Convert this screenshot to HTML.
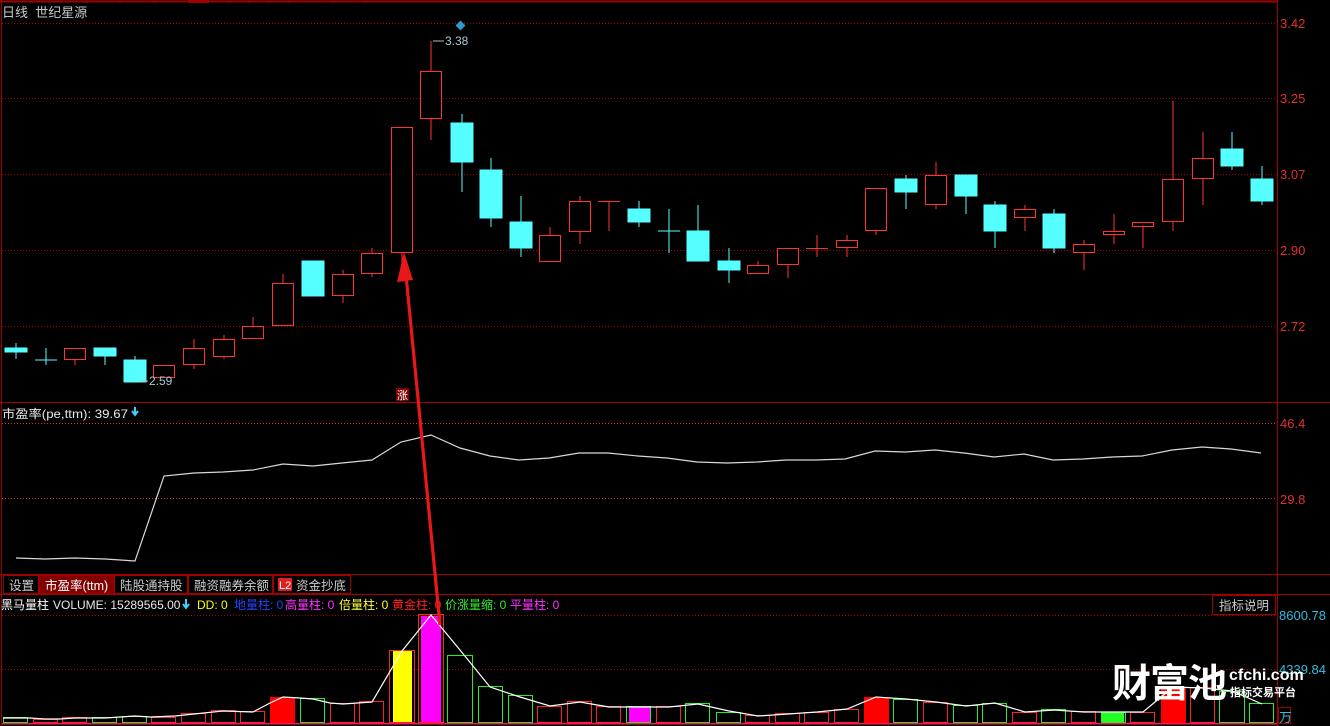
<!DOCTYPE html>
<html><head><meta charset="utf-8"><style>
html,body{margin:0;padding:0;background:#000;width:1330px;height:726px;overflow:hidden}
svg{display:block}
text{font-family:"Liberation Sans","Noto Sans CJK SC",sans-serif}
</style></head><body>
<svg width="1330" height="726" viewBox="0 0 1330 726" xmlns="http://www.w3.org/2000/svg">
<rect width="1330" height="726" fill="#000"/>
<g shape-rendering="crispEdges">
<line x1="0" y1="1.5" x2="1277" y2="1.5" stroke="#a00000" stroke-width="2"/>
<g stroke="#a00000"><line x1="33" y1="0" x2="33" y2="3"/><line x1="60" y1="0" x2="60" y2="3"/><line x1="87" y1="0" x2="87" y2="3"/><line x1="120" y1="0" x2="120" y2="3"/><line x1="155" y1="0" x2="155" y2="3"/><line x1="229" y1="0" x2="229" y2="3"/><line x1="249" y1="0" x2="249" y2="3"/><line x1="269" y1="0" x2="269" y2="3"/><line x1="289" y1="0" x2="289" y2="3"/><line x1="333" y1="0" x2="333" y2="3"/><line x1="365" y1="0" x2="365" y2="3"/></g>
<rect x="188" y="0" width="21" height="3" fill="#a00000"/>
<line x1="1.5" y1="0" x2="1.5" y2="726" stroke="#a00000"/>
<line x1="1277.5" y1="0" x2="1277.5" y2="726" stroke="#a00000"/>
<line x1="0" y1="402.5" x2="1330" y2="402.5" stroke="#a00000"/>
<line x1="0" y1="574.5" x2="1330" y2="574.5" stroke="#a00000"/>
<line x1="0" y1="594.5" x2="1330" y2="594.5" stroke="#a00000"/>
<g stroke="#b00000" stroke-dasharray="1,2">
<line x1="2" y1="23.5" x2="1277" y2="23.5"/><line x1="2" y1="98.5" x2="1277" y2="98.5"/><line x1="2" y1="174.5" x2="1277" y2="174.5"/><line x1="2" y1="250.5" x2="1277" y2="250.5"/><line x1="2" y1="326.5" x2="1277" y2="326.5"/>
<line x1="2" y1="423.5" x2="1277" y2="423.5" stroke="#e03030"/><line x1="2" y1="498.5" x2="1277" y2="498.5" stroke="#e03030"/>
<line x1="2" y1="615.5" x2="1277" y2="615.5"/><line x1="2" y1="669.5" x2="1277" y2="669.5"/>
</g>
</g>
<g fill="#e03030" font-size="13">
<text x="1280" y="28">3.42</text><text x="1280" y="103">3.25</text><text x="1280" y="179">3.07</text><text x="1280" y="255">2.90</text><text x="1280" y="331">2.72</text>
<text x="1280" y="428">46.4</text><text x="1280" y="504">29.8</text>
</g>
<g fill="#33bbdd" font-size="13"><text x="1279" y="620">8600.78</text><text x="1279" y="674">4339.84</text></g>
<rect x="1278.5" y="707.5" width="12" height="16" fill="none" stroke="#a00000"/>
<text x="1279" y="722" fill="#33bbdd" font-size="13">万</text>
<text x="2" y="17" fill="#c8c8c8" font-size="13">日线&#160;&#160;世纪星源</text>
<text x="2" y="418" fill="#e8e8e8" font-size="12" font-family="Liberation Mono" textLength="126" lengthAdjust="spacingAndGlyphs">市盈率(pe,ttm): 39.67</text>
<path d="M135 407v7M132 411l3 4 3-4" stroke="#44ccff" stroke-width="2" fill="none"/>

<g shape-rendering="crispEdges" stroke-width="1.2">
<g stroke="#55ffff" fill="#55ffff">
<line x1="16" y1="343" x2="16" y2="359"/><rect x="5" y="348" width="22" height="4"/>
<line x1="46" y1="348" x2="46" y2="365"/><line x1="35" y1="360" x2="57" y2="360"/>
<line x1="105" y1="348" x2="105" y2="365"/><rect x="94" y="348" width="22" height="8"/>
<line x1="135" y1="356" x2="135" y2="382"/><rect x="124" y="360" width="22" height="22"/>
<rect x="302" y="261" width="22" height="35"/>
<line x1="462" y1="114" x2="462" y2="192"/><rect x="451" y="123" width="22" height="39"/>
<line x1="491" y1="158" x2="491" y2="227"/><rect x="480" y="170" width="22" height="48"/>
<line x1="521" y1="196" x2="521" y2="257"/><rect x="510" y="222" width="22" height="26"/>
<line x1="639" y1="201" x2="639" y2="227"/><rect x="628" y="209" width="22" height="13"/>
<line x1="669" y1="209" x2="669" y2="253"/><line x1="658" y1="231" x2="680" y2="231"/>
<line x1="698" y1="205" x2="698" y2="261"/><rect x="687" y="231" width="22" height="30"/>
<line x1="729" y1="248" x2="729" y2="283"/><rect x="718" y="261" width="22" height="9"/>
<line x1="906" y1="175" x2="906" y2="209"/><rect x="895" y="179" width="22" height="13"/>
<line x1="966" y1="175" x2="966" y2="214"/><rect x="955" y="175" width="22" height="21"/>
<line x1="995" y1="201" x2="995" y2="248"/><rect x="984" y="205" width="22" height="26"/>
<line x1="1054" y1="209" x2="1054" y2="253"/><rect x="1043" y="214" width="22" height="34"/>
<line x1="1232" y1="132" x2="1232" y2="170"/><rect x="1221" y="149" width="22" height="17"/>
<line x1="1262" y1="166" x2="1262" y2="205"/><rect x="1251" y="179" width="22" height="22"/>
</g>
<g stroke="#ff3333" fill="#000">
<line x1="75" y1="359" x2="75" y2="365"/><rect x="64.5" y="348.5" width="21" height="11"/>
<rect x="153.5" y="365.5" width="21" height="12"/>
<line x1="194" y1="339" x2="194" y2="369"/><rect x="183.5" y="348.5" width="21" height="16"/>
<line x1="224" y1="335" x2="224" y2="359"/><rect x="213.5" y="339.5" width="21" height="17"/>
<line x1="253" y1="317" x2="253" y2="326"/><rect x="242.5" y="326.5" width="21" height="12"/>
<line x1="283" y1="274" x2="283" y2="283"/><rect x="272.5" y="283.5" width="21" height="42"/>
<line x1="343" y1="270" x2="343" y2="303"/><rect x="332.5" y="274.5" width="21" height="21"/>
<line x1="372" y1="248" x2="372" y2="277"/><rect x="361.5" y="253.5" width="21" height="20"/>
<line x1="402" y1="252" x2="402" y2="263"/><rect x="391.5" y="127.5" width="21" height="125"/>
<line x1="431" y1="41" x2="431" y2="140"/><rect x="420.5" y="71.5" width="21" height="47"/>
<line x1="550" y1="227" x2="550" y2="235"/><rect x="539.5" y="235.5" width="21" height="26"/>
<line x1="580" y1="196" x2="580" y2="244"/><rect x="569.5" y="201.5" width="21" height="30"/>
<line x1="609" y1="201" x2="609" y2="231"/><line x1="598" y1="201.5" x2="620" y2="201.5"/>
<line x1="758" y1="261" x2="758" y2="265"/><rect x="747.5" y="265.5" width="21" height="8"/>
<line x1="788" y1="264" x2="788" y2="278"/><rect x="777.5" y="248.5" width="21" height="16"/>
<line x1="817" y1="235" x2="817" y2="257"/><line x1="806" y1="248.5" x2="828" y2="248.5"/>
<line x1="847" y1="235" x2="847" y2="257"/><rect x="836.5" y="240.5" width="21" height="7"/>
<line x1="876" y1="230" x2="876" y2="235"/><rect x="865.5" y="188.5" width="21" height="42"/>
<line x1="936" y1="162" x2="936" y2="209"/><rect x="925.5" y="175.5" width="21" height="29"/>
<line x1="1025" y1="205" x2="1025" y2="231"/><rect x="1014.5" y="209.5" width="21" height="8"/>
<line x1="1084" y1="240" x2="1084" y2="270"/><rect x="1073.5" y="244.5" width="21" height="8"/>
<line x1="1114" y1="214" x2="1114" y2="244"/><rect x="1103.5" y="231.5" width="21" height="3"/>
<line x1="1143" y1="226" x2="1143" y2="248"/><rect x="1132.5" y="222.5" width="21" height="4"/>
<line x1="1173" y1="101" x2="1173" y2="231"/><rect x="1162.5" y="179.5" width="21" height="42"/>
<line x1="1203" y1="132" x2="1203" y2="205"/><rect x="1192.5" y="158.5" width="21" height="20"/>
</g>
</g>
<rect x="457" y="22" width="7" height="7" fill="#3399cc" transform="rotate(45 460.5 25.5)"/>
<line x1="433" y1="41" x2="444" y2="41" stroke="#bbb"/>
<text x="445" y="45" fill="#a8c8d8" font-size="12">3.38</text>
<line x1="140" y1="381" x2="148" y2="381" stroke="#bbb"/>
<text x="149" y="385" fill="#a8c8d8" font-size="12">2.59</text>
<rect x="396" y="388" width="13" height="13" fill="#800000"/>
<text x="397" y="399" fill="#fff" font-size="11">涨</text>

<polyline fill="none" stroke="#d8d8d8" stroke-width="1.2" points="16,558 45,559 75,558 105,559 135,561 164,476 194,473 223,472 253,470 283,464 313,466 342,463 372,460 401,442 431,435 460,448 490,456 519,460 549,458 579,453 608,453 638,456 667,458 697,462 727,463 757,462 786,460 816,460 845,459 875,451 905,452 935,450 964,453 994,457 1024,454 1053,460 1083,459 1112,457 1142,456 1172,450 1202,447 1231,449 1261,453"/>

<g font-size="12.5">
<rect x="3.5" y="575.5" width="35" height="18" fill="#000" stroke="#a00000"/><text x="9" y="590" fill="#ccc">设置</text>
<rect x="39.5" y="575.5" width="74" height="18" fill="#800000" stroke="#a00000"/><text x="45" y="590" fill="#fff">市盈率(ttm)</text>
<rect x="114.5" y="575.5" width="73" height="18" fill="#000" stroke="#a00000"/><text x="120" y="590" fill="#ccc">陆股通持股</text>
<rect x="188.5" y="575.5" width="84" height="18" fill="#000" stroke="#a00000"/><text x="194" y="590" fill="#ccc">融资融券余额</text>
<rect x="273.5" y="575.5" width="77" height="18" fill="#000" stroke="#a00000"/>
<rect x="278" y="578" width="14" height="13" fill="#e02020"/><text x="279" y="589" fill="#fff" font-size="11">L2</text>
<text x="296" y="590" fill="#ccc">资金抄底</text>
</g>
<g font-size="12">
<text x="1" y="609" fill="#fff">黑马量柱</text>
<text x="53" y="609" fill="#e8e8e8">VOLUME: 15289565.00</text>
<text x="197" y="609" fill="#ffff00">DD: 0</text>
<text x="234" y="609" fill="#2244ff">地量柱: 0</text>
<text x="285" y="609" fill="#ff33ff">高量柱: 0</text>
<text x="339" y="609" fill="#ffff33">倍量柱: 0</text>
<text x="392" y="609" fill="#ff2020">黄金柱: 0</text>
<text x="445" y="609" fill="#33ee33">价涨量缩: 0</text>
<text x="510" y="609" fill="#ff33ff">平量柱: 0</text>
</g>
<path d="M186 599v8M183 604l3 4 3-4" stroke="#44ccff" stroke-width="2" fill="none"/>
<rect x="1212.5" y="595.5" width="63" height="19" fill="#000" stroke="#a00000"/>
<text x="1219" y="610" fill="#ccc" font-size="12.5">指标说明</text>

<g shape-rendering="crispEdges" stroke-width="1.2">
<g fill="#ff0000" stroke="#ff0000">
<rect x="270.5" y="697.5" width="24" height="25"/><rect x="864.5" y="697.5" width="24" height="25"/><rect x="1161.5" y="687.5" width="24" height="35"/>
</g>
<rect x="1102" y="713" width="22" height="10" fill="#22ff22"/>
<rect x="393" y="651" width="19" height="72" fill="#ffff00"/>
<rect x="421" y="616" width="20" height="107" fill="#ff00ff"/>
<rect x="629" y="707" width="21" height="16" fill="#ff00ff"/>
<g fill="none" stroke="#ff2222">
<rect x="33.5" y="719.5" width="24" height="3"/><rect x="62.5" y="717.5" width="24" height="5"/><rect x="151.5" y="717.5" width="24" height="5"/><rect x="181.5" y="713.5" width="24" height="9"/><rect x="211.5" y="710.5" width="24" height="12"/><rect x="240.5" y="711.5" width="24" height="11"/><rect x="330.5" y="703.5" width="24" height="19"/><rect x="359.5" y="701.5" width="24" height="21"/><rect x="389.5" y="650.5" width="25" height="72"/><rect x="418.5" y="614.5" width="25" height="108"/><rect x="537.5" y="706.5" width="24" height="16"/><rect x="567.5" y="701.5" width="24" height="21"/><rect x="596.5" y="706.5" width="24" height="16"/><rect x="656.5" y="706.5" width="24" height="16"/><rect x="745.5" y="715.5" width="24" height="7"/><rect x="775.5" y="713.5" width="24" height="9"/><rect x="804.5" y="712.5" width="24" height="10"/><rect x="834.5" y="709.5" width="24" height="13"/><rect x="923.5" y="702.5" width="24" height="20"/><rect x="1012.5" y="712.5" width="24" height="10"/><rect x="1071.5" y="711.5" width="24" height="11"/><rect x="1130.5" y="712.5" width="24" height="10"/><rect x="1190.5" y="687.5" width="24" height="35"/>
</g>
<g fill="none" stroke="#22ee22">
<rect x="3.5" y="717.5" width="24" height="5"/><rect x="92.5" y="717.5" width="24" height="5"/><rect x="122.5" y="716.5" width="24" height="6"/><rect x="300.5" y="698.5" width="24" height="24"/><rect x="447.5" y="655.5" width="25" height="67"/><rect x="478.5" y="686.5" width="24" height="36"/><rect x="508.5" y="695.5" width="24" height="27"/><rect x="626.5" y="706.5" width="24" height="16"/><rect x="685.5" y="703.5" width="24" height="19"/><rect x="716.5" y="712.5" width="24" height="10"/><rect x="893.5" y="699.5" width="24" height="23"/><rect x="953.5" y="705.5" width="24" height="17"/><rect x="982.5" y="703.5" width="24" height="19"/><rect x="1041.5" y="709.5" width="24" height="13"/><rect x="1101.5" y="712.5" width="24" height="10"/><rect x="1219.5" y="691.5" width="25" height="31"/><rect x="1249.5" y="703.5" width="24" height="19"/>
</g>
<line x1="2" y1="723.5" x2="1277" y2="723.5" stroke="#ff1060" stroke-width="1.5"/>
</g>
<polyline fill="none" stroke="#fff" stroke-width="1.2" points="3,718 30,718 45,719 60,719 75,718 105,718 120,717 135,716 150,717 175,716 194,714 223,711 253,712 270,703 283,697 300,698 313,699 330,703 343,704 372,702 402,651 431,615 460,650 490,687 520,697 550,706 580,702 609,707 639,707 669,707 698,704 729,711 758,716 788,714 817,712 847,709 876,697 906,699 936,702 966,706 995,703 1025,712 1054,710 1084,712 1114,712 1143,712 1173,687 1203,688 1232,691 1262,704"/>

<line x1="440" y1="625" x2="406" y2="275" stroke="#e81818" stroke-width="3.2"/>
<polygon points="404,252 397,282 413,280" fill="#e81818"/>

<text x="1112" y="697" fill="#fff" font-size="39" font-weight="bold" font-family="Noto Sans CJK SC, sans-serif" letter-spacing="-1">财富池</text>
<text x="1229" y="680" fill="#fff" font-size="16" font-weight="bold">cfchi.com</text>
<text x="1230" y="696" fill="#fff" font-size="11" font-weight="bold" font-family="Noto Sans CJK SC, sans-serif">指标交易平台</text>
</svg>
</body></html>
